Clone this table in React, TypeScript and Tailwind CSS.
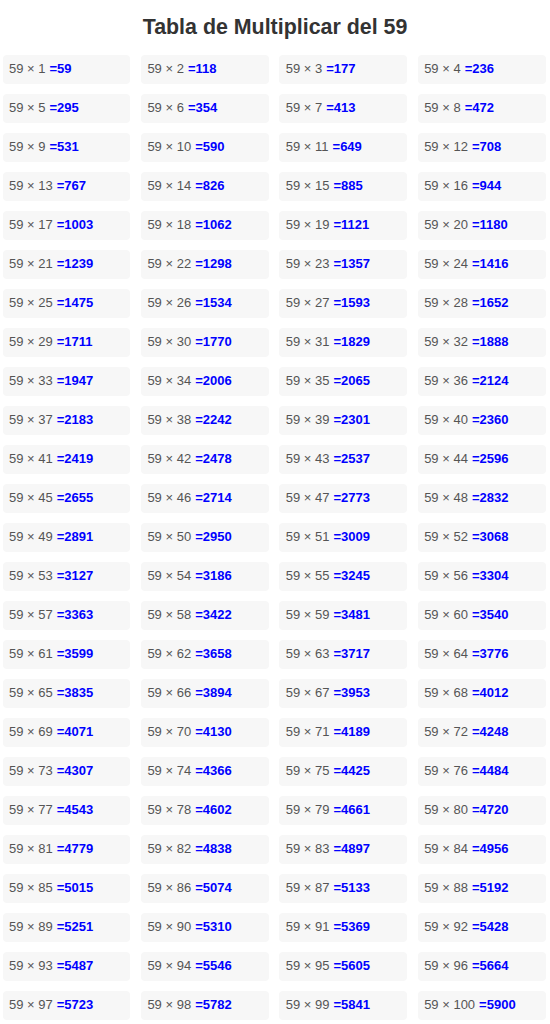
import React from "react";

export default function App() {
  const items = Array.from({ length: 100 }, (_, i) => i + 1);
  return (
    <div
      className="w-[550px] bg-white"
      style={{ fontFamily: '"Liberation Sans", Arial, sans-serif' }}
    >
      <h1 className="pt-[15px] pb-[16px] text-center text-[21.4px] leading-[24px] font-bold text-[#333333]">
        Tabla de Multiplicar del 59
      </h1>
      <div className="grid grid-cols-4 gap-x-[10.5px] gap-y-[10.5px] pl-[2.5px] pr-[4.5px]">
        {items.map((n) => (
          <div
            key={n}
            className="flex h-[28.5px] items-center rounded-[4px] bg-[#f7f7f7] pl-[6.5px] text-[13px] leading-[16px] text-[#555555] whitespace-nowrap"
          >
            <span>59 × {n}</span>
            <span className="ml-[4px] font-bold text-[#0000ff]">={59 * n}</span>
          </div>
        ))}
      </div>
    </div>
  );
}
